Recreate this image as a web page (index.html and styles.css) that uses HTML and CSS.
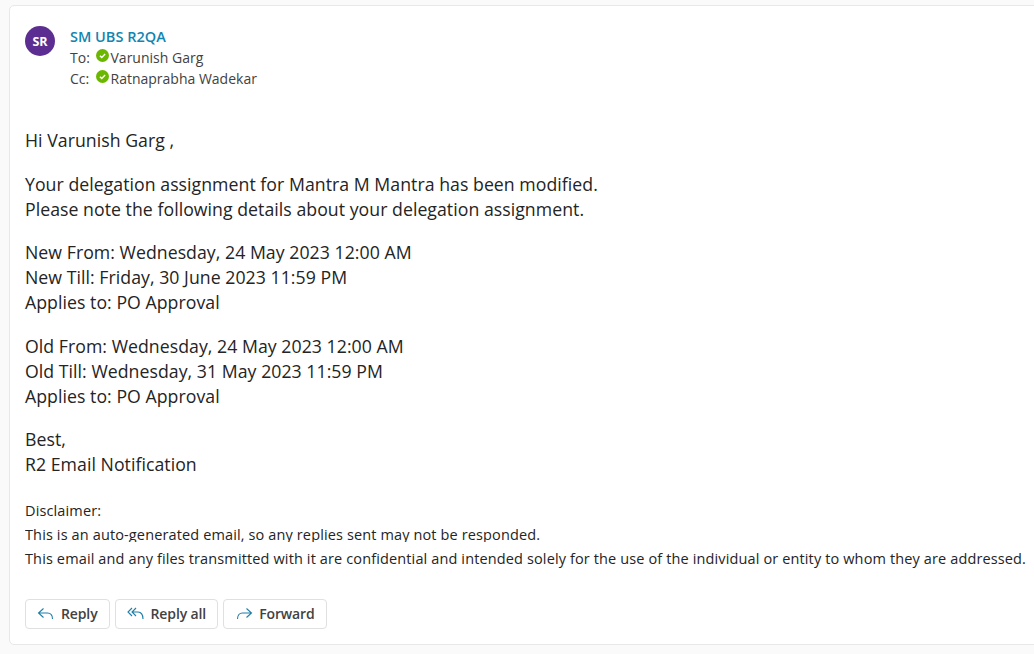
FILE: index.html
```html
<!DOCTYPE html>
<html>
<head>
    <title>Delegation assignment</title>
    <meta name="viewport" content="width=device-width, initial-scale=1.0">
    <link rel="stylesheet" href="styles.css">
</head>
<body>
    <div class="mail-card">
        <!-- Sender and recipients -->
        <div class="mail-header">
            <div class="avatar">SR</div>
            <div class="people">
                <div class="sender">SM UBS R2QA</div>
                <div class="person-row">
                    <span class="person-label">To:</span>
                    <svg class="presence" viewBox="0 0 14 14"><circle cx="7" cy="7" r="7" fill="#6bb700"/><path d="M4.2 7.2l2 2 3.6-3.8" fill="none" stroke="#fff" stroke-width="1.5"/></svg>
                    <span>Varunish Garg</span>
                </div>
                <div class="person-row">
                    <span class="person-label">Cc:</span>
                    <svg class="presence" viewBox="0 0 14 14"><circle cx="7" cy="7" r="7" fill="#6bb700"/><path d="M4.2 7.2l2 2 3.6-3.8" fill="none" stroke="#fff" stroke-width="1.5"/></svg>
                    <span>Ratnaprabha Wadekar</span>
                </div>
            </div>
        </div>

        <!-- Message body -->
        <div class="mail-body">
            <p>Hi Varunish Garg ,</p>
            <p>Your delegation assignment for Mantra M Mantra has been modified.<br>Please note the following details about your delegation assignment.</p>
            <p>New From: Wednesday, 24 May 2023 12:00 AM<br>New Till: Friday, 30 June 2023 11:59 PM<br>Applies to: PO Approval</p>
            <p>Old From: Wednesday, 24 May 2023 12:00 AM<br>Old Till: Wednesday, 31 May 2023 11:59 PM<br>Applies to: PO Approval</p>
            <p>Best,<br>R2 Email Notification</p>
        </div>

        <div class="disclaimer">
            <div class="disclaimer-title">Disclaimer:</div>
            <div class="disclaimer-clip">This is an auto-generated email, so any replies sent may not be responded.</div>
            <div class="disclaimer-line">This email and any files transmitted with it are confidential and intended solely for the use of the individual or entity to whom they are addressed.</div>
        </div>

        <!-- Action buttons -->
        <div class="mail-actions">
            <button class="action-btn">
                <svg class="action-icon" viewBox="0 0 18 16"><path d="M6.5 2.5L1.5 7l5 4.5M1.5 7h9c3 0 5 2 5 6" fill="none" stroke-width="1.1"/></svg>
                Reply
            </button>
            <button class="action-btn">
                <svg class="action-icon" viewBox="0 0 18 16"><path d="M5 2L1 6l4 4M9 2L5 6l4 4M5 6h6c3 0 5 2.5 5 7" fill="none" stroke-width="1.1"/></svg>
                Reply all
            </button>
            <button class="action-btn">
                <svg class="action-icon" viewBox="0 0 18 16"><path d="M11.5 2.5l5 4.5-5 4.5M16.500 7h-9c-3 0-5 2-5 6" fill="none" stroke-width="1.1"/></svg>
                Forward
            </button>
        </div>
    </div>
</body>
</html>
```

FILE: styles.css
```css
* {
    box-sizing: border-box;
    margin: 0;
    padding: 0;
}

html, body {
    height: 100%;
    overflow: hidden;
}

body {
    font-family: "Open Sans", "Noto Sans", sans-serif;
    background-color: #fafafa;
    color: #242424;
    padding: 5px 0 0 9px;
}

.mail-card {
    width: 1040px;
    height: 640px;
    background: white;
    border: 1px solid #e8e8e8;
    border-radius: 5px;
    padding: 20px 0 0 15px;
}

/* Header */
.mail-header {
    display: flex;
    gap: 15px;
}

.avatar {
    width: 30px;
    height: 30px;
    border-radius: 50%;
    background-color: #5c2e91;
    color: white;
    font-size: 12.5px;
    font-weight: 700;
    display: flex;
    align-items: center;
    justify-content: center;
}

.sender {
    color: #1285b0;
    font-size: 14.5px;
    font-weight: 600;
    line-height: 21px;
}

.person-row {
    display: flex;
    align-items: center;
    color: #424242;
    font-size: 14px;
    letter-spacing: 0;
    line-height: 21px;
}

.person-label {
    min-width: 25.5px;
}

.presence {
    width: 13px;
    height: 13px;
    margin-right: 2px;
    margin-top: -4px;
}

/* Body */
.mail-body {
    margin-top: 39px;
    font-size: 17.7px;
    letter-spacing: 0.04px;
    line-height: 25px;
}

.mail-body p {
    margin-bottom: 18.6px;
}

.disclaimer {
    font-size: 14.5px;
    letter-spacing: 0.13px;
    white-space: nowrap;
    margin-top: 21.6px;
}

.disclaimer-title {
    line-height: 24px;
}

.disclaimer-clip {
    height: 19px;
    line-height: 24px;
    overflow: hidden;
}

.disclaimer-line {
    line-height: 24px;
    margin-top: 5px;
}

/* Buttons */
.mail-actions {
    display: flex;
    gap: 5px;
    margin-top: 28px;
}

.action-btn {
    display: flex;
    align-items: center;
    gap: 6px;
    height: 30px;
    padding: 0 11px;
    background: white;
    border: 1px solid #e0e0e0;
    border-radius: 4px;
    color: #424242;
    font-family: inherit;
    font-size: 14px;
    font-weight: 600;
    letter-spacing: -0.12px;
}

.action-icon {
    width: 18px;
    height: 16px;
    stroke: #1f7fa8;
}
```
